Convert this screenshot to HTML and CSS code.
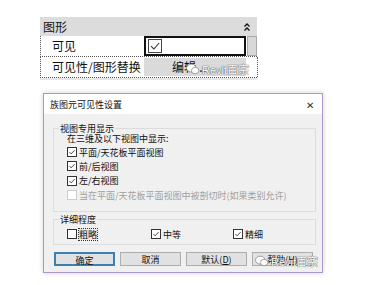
FILE: index.html
```html
<!DOCTYPE html>
<html lang="zh-CN">
<head>
  <meta charset="UTF-8" />
  <title>族图元可见性设置</title>
  <link rel="stylesheet" href="styles.css">
</head>
<body>
  <div class="panel">
    <div class="panel-head">
      <span>图形</span>
      <svg class="chev" viewBox="0 0 8 10"><path d="M1.5 4.5 L4 2 L6.5 4.5 M1.5 8.5 L4 6 L6.5 8.5" fill="none" stroke="#111" stroke-width="1.3"/></svg>
    </div>
    <div class="prop-row">
      <div class="prop-name">可见</div>
      <div class="prop-value check-cell">
        <span class="cb big"><svg viewBox="0 0 12 12"><path d="M2 6.2 L4.8 9 L10.2 3" fill="none" stroke="#333" stroke-width="1.1"/></svg></span>
      </div>
      <div class="scroll"></div>
    </div>
    <div class="prop-row">
      <div class="prop-name">可见性/图形替换</div>
      <div class="prop-value edit-btn">编辑...</div>
      <div class="scroll empty"></div>
    </div>
    <div class="panel-foot"></div>
  </div>

  <div class="dialog">
    <div class="title-bar">
      <span>族图元可见性设置</span>
      <span class="close">&#10005;</span>
    </div>
    <div class="dialog-body">
      <fieldset class="group">
        <legend>视图专用显示</legend>
        <div class="line">在三维及以下视图中显示:</div>
        <label class="opt"><span class="cb"><svg viewBox="0 0 10 10"><path d="M1.8 5 L4 7.3 L8.3 2.6" fill="none" stroke="#222" stroke-width="1"/></svg></span>平面/天花板平面视图</label>
        <label class="opt"><span class="cb"><svg viewBox="0 0 10 10"><path d="M1.8 5 L4 7.3 L8.3 2.6" fill="none" stroke="#222" stroke-width="1"/></svg></span>前/后视图</label>
        <label class="opt"><span class="cb"><svg viewBox="0 0 10 10"><path d="M1.8 5 L4 7.3 L8.3 2.6" fill="none" stroke="#222" stroke-width="1"/></svg></span>左/右视图</label>
        <label class="opt disabled"><span class="cb"></span>当在平面/天花板平面视图中被剖切时(如果类别允许)</label>
      </fieldset>

      <fieldset class="group detail">
        <legend>详细程度</legend>
        <div class="detail-row">
          <label class="opt"><span class="cb"></span><span class="focus">粗略</span></label>
          <label class="opt"><span class="cb"><svg viewBox="0 0 10 10"><path d="M1.8 5 L4 7.3 L8.3 2.6" fill="none" stroke="#222" stroke-width="1"/></svg></span>中等</label>
          <label class="opt"><span class="cb"><svg viewBox="0 0 10 10"><path d="M1.8 5 L4 7.3 L8.3 2.6" fill="none" stroke="#222" stroke-width="1"/></svg></span>精细</label>
        </div>
      </fieldset>

      <div class="buttons">
        <button class="primary">确定</button>
        <button>取消</button>
        <button>默认(<u>D</u>)</button>
        <button>帮助(<u>H</u>)</button>
      </div>
    </div>
  </div>

  <div class="mark mark-top">
    <svg viewBox="0 0 16 14"><ellipse cx="6" cy="6" rx="5.5" ry="4.6" fill="#fff" stroke="#777" stroke-width="0.8"/><ellipse cx="10.5" cy="8.8" rx="4.4" ry="3.7" fill="#fff" stroke="#777" stroke-width="0.8"/></svg>
    <span>Revit百宗</span>
  </div>
  <div class="mark mark-bottom">
    <svg viewBox="0 0 16 14"><ellipse cx="6" cy="6" rx="5.5" ry="4.6" fill="#fff" stroke="#777" stroke-width="0.8"/><ellipse cx="10.5" cy="8.8" rx="4.4" ry="3.7" fill="#fff" stroke="#777" stroke-width="0.8"/></svg>
    <span>Revit百宗</span>
  </div>
</body>
</html>
```

FILE: styles.css
```css
body {
  margin: 0;
  width: 391px;
  height: 285px;
  background: #ffffff;
  font-family: "Noto Sans CJK SC", "Noto Sans", sans-serif;
  color: #111;
  position: relative;
  overflow: hidden;
}

/* property panel */
.panel {
  margin: 17px 0 0 40px;
  width: 217px;
  font-size: 12px;
}
.panel-head {
  height: 19px;
  background: #dcdcdc;
  display: flex;
  justify-content: space-between;
  align-items: center;
  padding: 0 6px 0 3px;
  line-height: 1;
}
.chev {
  width: 8px;
  height: 10px;
}
.prop-row {
  display: grid;
  grid-template-columns: 103px 102px 12px;
  height: 20px;
  border-bottom: 1px dotted #555;
  border-left: 1px dotted #555;
}
.prop-name {
  padding-left: 11px;
  line-height: 20px;
}
.prop-value {
  height: 20px;
  box-sizing: border-box;
}
.check-cell {
  border: 2px solid #111;
  display: flex;
  align-items: center;
  padding-left: 2px;
}
.edit-btn {
  background: #dadada;
  text-align: right;
  padding-right: 40px;
  margin-top: 1px;
  height: 18px;
  line-height: 18px;
}
.scroll {
  background: #d8d8d8;
  border: 1px solid #aaa;
  margin: 0 1px;
}
.scroll.empty {
  background: none;
  border: none;
  border-right: 1px dotted #555;
  margin: 0;
}
.panel-foot {
  height: 2px;
  background: #e6e6e6;
}

.cb {
  display: inline-flex;
  width: 8px;
  height: 8px;
  border: 1px solid #333;
  background: #fff;
  margin-right: 2px;
  flex: none;
}
.cb svg {
  width: 100%;
  height: 100%;
}
.cb.big {
  width: 12px;
  height: 12px;
  border-color: #444;
}

/* dialog */
.dialog {
  margin: 13px 0 0 43px;
  width: 278px;
  height: 178px;
  border: 1px solid #a999cf;
  background: #f0f0f0;
  box-shadow: 0 0 5px rgba(0, 0, 0, 0.18);
  font-size: 9px;
  display: flex;
  flex-direction: column;
}
.title-bar {
  height: 20px;
  background: #fff;
  display: flex;
  justify-content: space-between;
  align-items: center;
  padding: 0 8px 0 6px;
}
.close {
  font-size: 10px;
  color: #333;
}
.dialog-body {
  padding: 10px 6px 0 9px;
  display: flex;
  flex-direction: column;
}
.group {
  margin: 0;
  border: 1px solid #dcdcdc;
  padding: 0 0 9px 13px;
  min-width: 0;
}
.group legend {
  padding: 0 1px;
  margin-left: -8px;
  line-height: 9px;
  height: 9px;
}
.line {
  line-height: 11px;
}
.opt {
  display: flex;
  align-items: center;
  height: 14.3px;
  line-height: 11px;
}
.line + .opt {
  margin-top: 1px;
}
.opt.disabled {
  color: #a0a0a0;
}
.opt.disabled .cb {
  border-color: #ccc;
}
.detail {
  margin-top: 3px;
  padding-bottom: 3px;
}
.detail-row {
  display: grid;
  grid-template-columns: 84px 82px 1fr;
  margin-top: 3px;
}
.focus {
  outline: 1px dotted #333;
  background: #e8e8e8;
}
.buttons {
  display: grid;
  grid-template-columns: repeat(4, 61px);
  gap: 5px;
  margin-top: 7px;
  margin-left: 1px;
}
button {
  height: 14px;
  padding: 0;
  font: inherit;
  font-size: 9px;
  background: #e1e1e1;
  border: 1px solid #adadad;
  color: #111;
}
button.primary {
  border: 2px solid #3c7fb1;
}

/* watermarks laid over the picture */
.mark {
  position: absolute;
  display: flex;
  align-items: center;
  gap: 2px;
  font-family: "Liberation Sans", "Noto Sans CJK SC", sans-serif;
  font-size: 11px;
  color: #fff;
  text-shadow: 0 0 1px #444, 0 0 1px #444;
}
.mark svg {
  width: 14px;
  height: 12px;
}
.mark-top {
  left: 186px;
  top: 61px;
}
.mark-bottom {
  left: 255px;
  top: 253px;
}
```
